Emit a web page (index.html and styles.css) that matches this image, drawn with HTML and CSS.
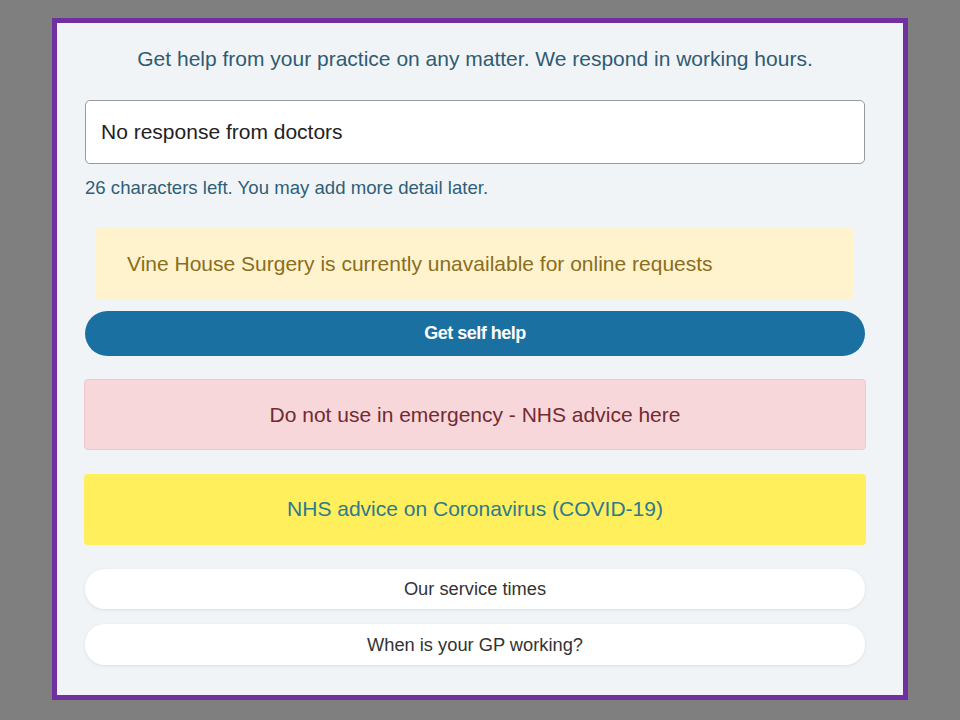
FILE: index.html
```html
<!DOCTYPE html>
<html lang="en">
<head>
    <meta charset="UTF-8">
    <meta name="viewport" content="width=device-width, initial-scale=1.0">
    <title>Contact your practice</title>
    <link rel="stylesheet" href="styles.css">
</head>
<body>
    <div class="frame">
        <p class="intro">Get help from your practice on any matter. We respond in working hours.</p>

        <input type="text" class="request" value="No response from doctors">
        <p class="hint">26 characters left. You may add more detail later.</p>

        <div class="notice">Vine House Surgery is currently unavailable for online requests</div>
        <button class="btn-primary">Get self help</button>

        <div class="emergency">Do not use in emergency - NHS advice here</div>
        <div class="covid">NHS advice on Coronavirus (COVID-19)</div>

        <button class="btn-pill">Our service times</button>
        <button class="btn-pill second">When is your GP working?</button>
    </div>
</body>
</html>
```

FILE: styles.css
```css
body {
    margin: 0;
    background-color: #7f7f7f;
    font-family: 'Liberation Sans', Arial, sans-serif;
}
.frame {
    box-sizing: border-box;
    width: 856px;
    height: 682px;
    margin: 18px 0 0 52px;
    border: 5px solid #7030a0;
    background-color: #f1f4f7;
    padding: 24px 38px 0 28px;
    display: flex;
    flex-direction: column;
}
.intro {
    margin: 0;
    font-size: 21px;
    line-height: 24px;
    text-align: center;
    color: #2f5b73;
}
.request {
    box-sizing: border-box;
    margin-top: 29px;
    height: 64px;
    width: 100%;
    padding: 0 15px;
    border: 1px solid #999;
    border-radius: 5px;
    background: #fff;
    font-family: inherit;
    font-size: 21px;
    color: #222;
    outline: none;
}
.hint {
    margin: 14px 0 0;
    font-size: 18.6px;
    line-height: 20px;
    color: #2e5f78;
}
.notice {
    margin: 30px 11px 0;
    height: 72px;
    padding-left: 31px;
    display: flex;
    align-items: center;
    background-color: #fff3cd;
    border-radius: 4px;
    font-size: 21px;
    color: #8a6d1f;
}
.btn-primary {
    margin-top: 11px;
    height: 45px;
    border: none;
    border-radius: 23px;
    background-color: #1a70a1;
    color: #fff;
    font-family: inherit;
    font-size: 18px;
    font-weight: bold;
    letter-spacing: -0.5px;
}
.emergency,
.covid {
    margin: 23px -1px 0;
    height: 71px;
    display: flex;
    align-items: center;
    justify-content: center;
    border-radius: 4px;
    font-size: 21px;
}
.emergency {
    box-sizing: border-box;
    background-color: #f8d7da;
    border: 1px solid #f3c6cb;
    color: #722a33;
}
.covid {
    box-sizing: border-box;
    margin-top: 24px;
    padding-bottom: 2px;
    background-color: #ffef5c;
    color: #2d7a8c;
}
.btn-pill {
    margin-top: 24px;
    height: 40px;
    border: none;
    border-radius: 20px;
    background-color: #fff;
    box-shadow: 0 1px 3px rgba(200, 205, 215, 0.5);
    font-family: inherit;
    font-size: 18.3px;
    color: #333;
}
.btn-pill.second {
    margin-top: 15px;
    height: 41px;
}
```
